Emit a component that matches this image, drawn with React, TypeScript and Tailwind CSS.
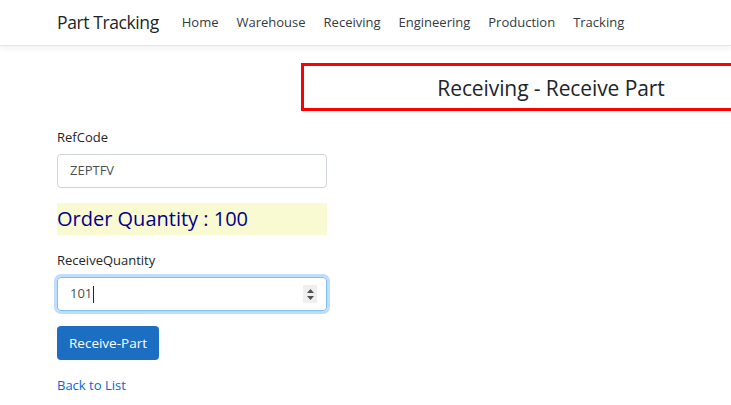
import React from "react";

const navLinks = ["Home", "Warehouse", "Receiving", "Engineering", "Production", "Tracking"];

const ReceivePartView: React.FC = () => {
  return (
    <div
      className="min-h-screen w-full overflow-hidden bg-white text-[14px] text-[#212529]"
      style={{ fontFamily: '"Open Sans", "Noto Sans", sans-serif' }}
    >
      {/* Navbar */}
      <header className="h-[46px] border-b border-[#e5e5e5] bg-white shadow-[0_3px_6px_rgba(0,0,0,0.05)]">
        <nav className="flex h-full items-center pl-[57px]">
          <span className="mr-[23px] text-[17.5px] tracking-[-0.4px] text-[#212529]">Part Tracking</span>
          <ul className="flex items-center gap-[18px]">
            {navLinks.map((link) => (
              <li key={link} className="text-[13px] text-[#343a40]">
                {link}
              </li>
            ))}
          </ul>
        </nav>
      </header>

      <main className="pl-[57px] pt-[17px]">
        {/* Title box */}
        <div className="ml-[244px] flex h-[48px] w-[500px] items-center justify-center border-[3px] border-[#ff0000] pt-[3px]">
          <h4 className="text-[21px] tracking-[-0.1px] text-[#212529]">Receiving - Receive Part</h4>
        </div>

        {/* Form */}
        <form className="mt-[17px] w-[270px]" onSubmit={(e) => e.preventDefault()}>
          <div className="mb-[15px]">
            <label className="mb-[8px] block text-[13px] leading-[18px]">RefCode</label>
            <div className="flex h-[34px] items-center rounded-[4px] border border-[#ced4da] px-[12px] text-[13px] text-[#495057]">
              ZEPTFV
            </div>
          </div>

          <div className="mb-[16px] flex h-[32px] items-center bg-[#fafad2] text-[20px] text-[#00008b]">
            Order Quantity : 100
          </div>

          <div className="mb-[15px]">
            <label className="mb-[8px] block text-[13px] leading-[18px]">ReceiveQuantity</label>
            <div className="relative flex h-[34px] items-center rounded-[4px] border border-[#80bdff] px-[12px] text-[13px] text-[#495057] shadow-[0_0_0_3px_rgba(0,123,255,0.25)]">
              <span>101</span>
              <span className="ml-[1px] h-[17px] w-[1px] bg-[#212529]" />
              <div className="absolute right-[9px] top-[7px] flex h-[18px] w-[14px] flex-col items-center justify-center gap-[3px] bg-[#efefef]">
                <svg width="7" height="4" viewBox="0 0 7 4">
                  <path d="M3.5 0 L7 4 L0 4 Z" fill="#505050" />
                </svg>
                <svg width="7" height="4" viewBox="0 0 7 4">
                  <path d="M0 0 L7 0 L3.5 4 Z" fill="#505050" />
                </svg>
              </div>
            </div>
          </div>

          <button
            type="submit"
            className="h-[34px] rounded-[4px] bg-[#1b6ec2] px-[12px] text-[13.5px] text-white"
          >
            Receive-Part
          </button>
        </form>

        <div className="mt-[14px]">
          <a href="#" className="text-[13px] text-[#0366d6]">
            Back to List
          </a>
        </div>
      </main>
    </div>
  );
};

export default function App() {
  return <ReceivePartView />;
}
